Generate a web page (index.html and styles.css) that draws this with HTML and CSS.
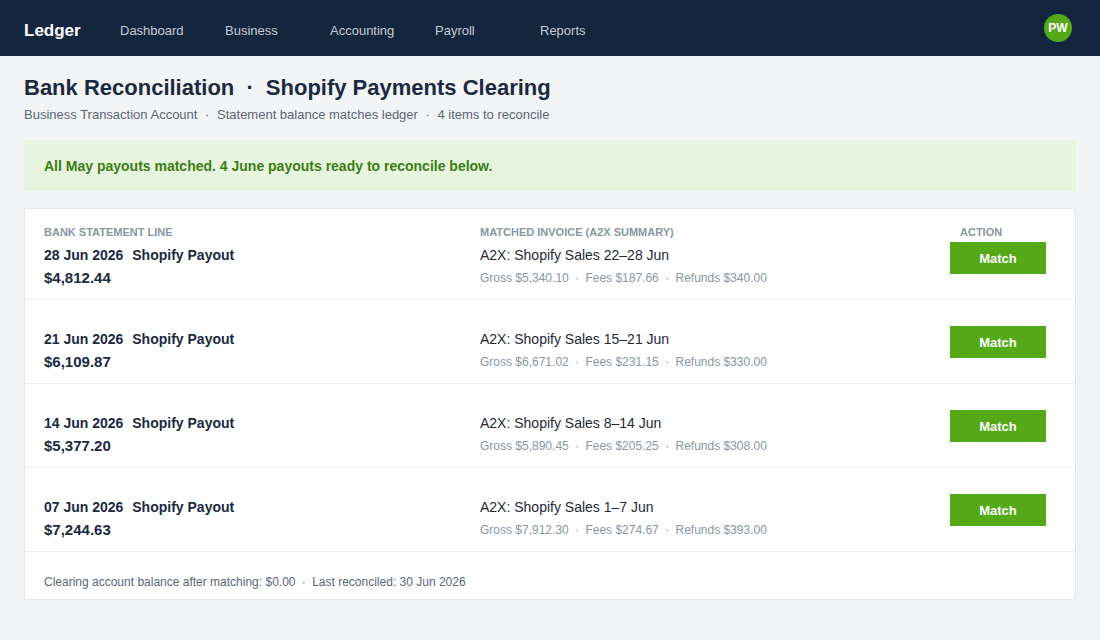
FILE: index.html
```html
<!DOCTYPE html>
<html lang="en">
<head>
<meta charset="UTF-8">
<meta name="viewport" content="width=device-width, initial-scale=1.0">
<title>Ledger - Bank Reconciliation</title>
<link rel="stylesheet" href="styles.css">
</head>
<body>
    <div class="topbar">
        <div class="logo">Ledger</div>
        <nav class="nav">
            <a href="#">Dashboard</a>
            <a href="#">Business</a>
            <a href="#">Accounting</a>
            <a href="#">Payroll</a>
            <a href="#">Reports</a>
        </nav>
        <div class="avatar">PW</div>
    </div>

    <div class="page">
        <h1 class="title">Bank Reconciliation <span class="sep">·</span> Shopify Payments Clearing</h1>
        <p class="subtitle">Business Transaction Account <span class="dot">·</span> Statement balance matches ledger <span class="dot">·</span> 4 items to reconcile</p>

        <div class="banner">All May payouts matched. 4 June payouts ready to reconcile below.</div>

        <div class="card">
            <div class="row first">
                <div class="col">
                    <div class="label">Bank statement line</div>
                    <div class="line-title"><span class="date">28 Jun 2026</span> Shopify Payout</div>
                    <div class="amount">$4,812.44</div>
                </div>
                <div class="col">
                    <div class="label">Matched invoice (A2X summary)</div>
                    <div class="inv-title">A2X: Shopify Sales 22–28 Jun</div>
                    <div class="inv-meta">Gross $5,340.10 <span class="dot">·</span> Fees $187.66 <span class="dot">·</span> Refunds $340.00</div>
                </div>
                <div class="col">
                    <div class="label action-label">Action</div>
                    <button class="match-btn">Match</button>
                </div>
            </div>

            <div class="row">
                <div class="col">
                    <div class="line-title"><span class="date">21 Jun 2026</span> Shopify Payout</div>
                    <div class="amount">$6,109.87</div>
                </div>
                <div class="col">
                    <div class="inv-title">A2X: Shopify Sales 15–21 Jun</div>
                    <div class="inv-meta">Gross $6,671.02 <span class="dot">·</span> Fees $231.15 <span class="dot">·</span> Refunds $330.00</div>
                </div>
                <div class="col">
                    <button class="match-btn">Match</button>
                </div>
            </div>

            <div class="row">
                <div class="col">
                    <div class="line-title"><span class="date">14 Jun 2026</span> Shopify Payout</div>
                    <div class="amount">$5,377.20</div>
                </div>
                <div class="col">
                    <div class="inv-title">A2X: Shopify Sales 8–14 Jun</div>
                    <div class="inv-meta">Gross $5,890.45 <span class="dot">·</span> Fees $205.25 <span class="dot">·</span> Refunds $308.00</div>
                </div>
                <div class="col">
                    <button class="match-btn">Match</button>
                </div>
            </div>

            <div class="row">
                <div class="col">
                    <div class="line-title"><span class="date">07 Jun 2026</span> Shopify Payout</div>
                    <div class="amount">$7,244.63</div>
                </div>
                <div class="col">
                    <div class="inv-title">A2X: Shopify Sales 1–7 Jun</div>
                    <div class="inv-meta">Gross $7,912.30 <span class="dot">·</span> Fees $274.67 <span class="dot">·</span> Refunds $393.00</div>
                </div>
                <div class="col">
                    <button class="match-btn">Match</button>
                </div>
            </div>

            <div class="card-footer">
                Clearing account balance after matching: $0.00 <span class="dot">·</span> Last reconciled: 30 Jun 2026
            </div>
        </div>
    </div>
</body>
</html>
```

FILE: styles.css
```css
body {
    margin: 0;
    background: #f3f4f6;
    font-family: "Liberation Sans", Arial, sans-serif;
    color: #1b2a3f;
}

/* top bar */
.topbar {
    display: flex;
    align-items: center;
    height: 56px;
    padding: 0 28px 0 24px;
    background: #14263e;
}
.logo {
    width: 96px;
    padding-top: 5px;
    color: #ffffff;
    font-size: 17px;
    font-weight: bold;
}
.nav {
    display: flex;
    flex: 1;
    padding-top: 5px;
}
.nav a {
    width: 105px;
    color: #c4cbd6;
    font-size: 13px;
    text-decoration: none;
}
.avatar {
    width: 28px;
    height: 28px;
    border-radius: 50%;
    background: #55a918;
    color: #ffffff;
    font-size: 12px;
    font-weight: bold;
    display: flex;
    align-items: center;
    justify-content: center;
}

/* page */
.page {
    padding: 18px 24px 24px;
}
.title {
    margin: 0;
    font-size: 22px;
    line-height: 28px;
    color: #1b2a3f;
}
.title .sep {
    margin: 0 6px;
}
.subtitle {
    margin: 4px 0 0;
    font-size: 13px;
    line-height: 18px;
    color: #5b6678;
}
.dot {
    margin: 0 3px;
}
.subtitle .dot {
    margin: 0 4px;
}
.banner {
    margin-top: 16px;
    padding: 16px 20px 15px;
    background: #e7f5de;
    color: #3b7d14;
    font-size: 14px;
    font-weight: bold;
    line-height: 20px;
}

/* reconciliation card */
.card {
    margin-top: 17px;
    background: #ffffff;
    border: 1px solid #e3e6ea;
}
.row {
    display: grid;
    grid-template-columns: 436px 1fr 105px;
    padding: 29px 20px 12px 19px;
    border-top: 1px solid #eceef1;
}
.row.first {
    padding-top: 15px;
    border-top: none;
}
.label {
    margin-bottom: 5px;
    font-size: 11px;
    line-height: 16px;
    font-weight: bold;
    text-transform: uppercase;
    color: #8b95a3;
}
.action-label {
    padding-left: 10px;
}
.line-title {
    font-size: 14px;
    line-height: 20px;
    font-weight: bold;
    color: #1b2a3f;
}
.date {
    margin-right: 5px;
}
.amount {
    height: 22px;
    font-size: 15px;
    line-height: 26px;
    font-weight: bold;
    color: #1b2a3f;
}
.inv-title {
    font-size: 14px;
    line-height: 20px;
    color: #1f2937;
}
.inv-meta {
    height: 22px;
    font-size: 12px;
    line-height: 26px;
    color: #8b95a3;
}
.match-btn {
    display: block;
    width: 96px;
    height: 32px;
    margin-top: -3px;
    border: none;
    background: #55a918;
    color: #ffffff;
    font-family: "Liberation Sans", Arial, sans-serif;
    font-size: 13px;
    font-weight: bold;
    cursor: pointer;
}
.card-footer {
    padding: 22px 20px 9px 19px;
    border-top: 1px solid #eceef1;
    font-size: 12px;
    line-height: 16px;
    color: #5b6678;
}
```
